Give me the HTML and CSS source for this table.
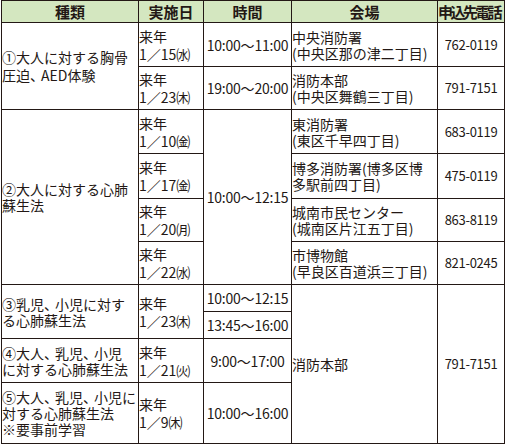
FILE: index.html
```html
<!DOCTYPE html>
<html lang="ja">
<head>
<meta charset="utf-8">
<title>講習会日程</title>
<link rel="stylesheet" href="styles.css">
</head>
<body>
<table class="tbl">
  <colgroup>
    <col class="c1"><col class="c2"><col class="c3"><col class="c4"><col class="c5">
  </colgroup>
  <thead>
    <tr class="h-head">
      <th>種類</th><th>実施日</th><th>時間</th><th>会場</th><th class="tel-h">申込先電話</th>
    </tr>
  </thead>
  <tbody>
    <tr class="h44">
      <td rowspan="2" class="kind kind-1">①大人に対する胸骨<br>圧迫<span class="pn">、</span>AED体験</td>
      <td class="date">来年<br>1／15㈬</td>
      <td class="time">10:00〜11:00</td>
      <td class="place">中央消防署<br>(中央区那の津二丁目)</td>
      <td class="tel">762-0119</td>
    </tr>
    <tr class="h43">
      <td class="date">来年<br>1／23㈭</td>
      <td class="time">19:00〜20:00</td>
      <td class="place">消防本部<br>(中央区舞鶴三丁目)</td>
      <td class="tel">791-7151</td>
    </tr>
    <tr class="h44">
      <td rowspan="4" class="kind">②大人に対する心肺<br>蘇生法</td>
      <td class="date">来年<br>1／10㈮</td>
      <td rowspan="4" class="time">10:00〜12:15</td>
      <td class="place">東消防署<br>(東区千早四丁目)</td>
      <td class="tel">683-0119</td>
    </tr>
    <tr class="h45">
      <td class="date">来年<br>1／17㈮</td>
      <td class="place">博多消防署(博多区博<br>多駅前四丁目)</td>
      <td class="tel">475-0119</td>
    </tr>
    <tr class="h43">
      <td class="date">来年<br>1／20㈪</td>
      <td class="place">城南市民センター<br>(城南区片江五丁目)</td>
      <td class="tel">863-8119</td>
    </tr>
    <tr class="h43">
      <td class="date">来年<br>1／22㈬</td>
      <td class="place">市博物館<br>(早良区百道浜三丁目)</td>
      <td class="tel">821-0245</td>
    </tr>
    <tr class="h27">
      <td rowspan="2" class="kind">③乳児<span class="pn">、</span>小児に対す<br>る心肺蘇生法</td>
      <td rowspan="2" class="date">来年<br>1／23㈭</td>
      <td class="time">10:00〜12:15</td>
      <td rowspan="4" class="place">消防本部</td>
      <td rowspan="4" class="tel">791-7151</td>
    </tr>
    <tr class="h27">
      <td class="time">13:45〜16:00</td>
    </tr>
    <tr class="h44">
      <td class="kind">④大人<span class="pn">、</span>乳児<span class="pn">、</span>小児<br>に対する心肺蘇生法</td>
      <td class="date">来年<br>1／21㈫</td>
      <td class="time">9:00〜17:00</td>
    </tr>
    <tr class="h61">
      <td class="kind">⑤大人<span class="pn">、</span>乳児<span class="pn">、</span>小児に<br>対する心肺蘇生法<br>※要事前学習</td>
      <td class="date">来年<br>1／9㈭</td>
      <td class="time">10:00〜16:00</td>
    </tr>
  </tbody>
</table>
</body>
</html>
```

FILE: styles.css
```css
body {
  margin: 0;
  background: #ffffff;
  font-family: "Noto Sans CJK JP", "Noto Sans", sans-serif;
  color: #231815;
}

.tbl {
  border-collapse: collapse;
  table-layout: fixed;
  width: 504px;
  margin: 0 0 0 1px;
  font-size: 14px;
}

.c1 { width: 137px; }
.c2 { width: 65px; }
.c3 { width: 88px; }
.c4 { width: 146px; }
.c5 { width: 67px; }

.tbl th,
.tbl td {
  border: 1px solid #231815;
  padding: 0;
  vertical-align: middle;
  white-space: nowrap;
  overflow: visible;
}

.tbl th {
  background: #d4e7c0;
  font-size: 15px;
  font-weight: bold;
  line-height: 20px;
  text-align: center;
  color: #231815;
}

.tbl th.tel-h {
  letter-spacing: -2.6px;
  text-align: left;
  padding-left: 0;
}

.h-head { height: 22px; }
.h27 { height: 27px; }
.h43 { height: 43px; }
.h44 { height: 44px; }
.h45 { height: 45px; }
.h61 { height: 61px; }

.kind {
  text-align: left;
  padding-left: 1px;
  line-height: 16px;
}

.kind-1 { line-height: 18px; }

.pn { letter-spacing: -3px; }

.date {
  text-align: left;
  padding-left: 2px;
  line-height: 18px;
}

.time {
  text-align: center;
  line-height: 18px;
  letter-spacing: -0.2px;
}

.place {
  text-align: left;
  padding-left: 4px;
  line-height: 16px;
}

.tel {
  text-align: center;
  font-size: 13px;
  letter-spacing: -0.3px;
  line-height: 18px;
}
```
